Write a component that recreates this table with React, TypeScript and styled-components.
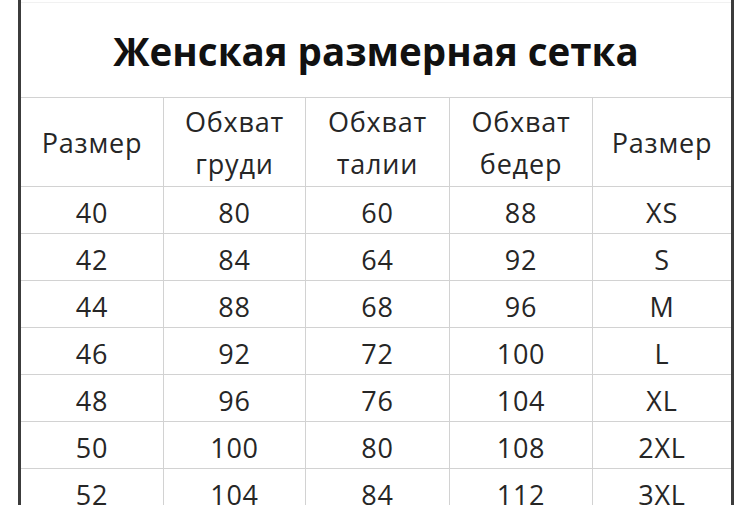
import React from 'react';
import styled, { createGlobalStyle } from 'styled-components';

const GlobalStyle = createGlobalStyle`
  html, body {
    margin: 0;
    padding: 0;
    background: #fff;
  }
  body {
    font-family: 'Open Sans', 'Noto Sans', sans-serif;
    color: #222;
  }
`;

const Sheet = styled.div`
  width: 716px;
  margin-left: 18px;
  height: 505px;
  overflow: hidden;
  box-sizing: border-box;
  border-left: 3px solid #3c3c3c;
  border-right: 3px solid #3c3c3c;
  background: #fff;
`;

const Title = styled.div`
  box-sizing: border-box;
  border-top: 1px solid #f1f1f1;
  margin-top: 2px;
  height: 96px;
  border-bottom: 1px solid #d2d2d2;
  display: flex;
  align-items: center;
  justify-content: center;
  padding-top: 2px;
  font-weight: 700;
  font-size: 38.5px;
  color: #111;
`;

const Grid = styled.div`
  display: grid;
  grid-template-columns: 143px 142px 144px 143px 1fr;
`;

const Cell = styled.div<{ $last?: boolean; $head?: boolean }>`
  height: ${(p) => (p.$head ? '89px' : '47px')};
  box-sizing: border-box;
  border-bottom: 1px solid #d2d2d2;
  border-right: ${(p) => (p.$last ? 'none' : '1px solid #d2d2d2')};
  display: flex;
  flex-direction: column;
  align-items: center;
  justify-content: center;
  padding-top: ${(p) => (p.$head ? '2px' : '6px')};
  font-size: 27px;
  line-height: ${(p) => (p.$head ? '42px' : '32px')};
  letter-spacing: 0.8px;
  color: #262626;
`;

const headers: string[][] = [
  ['Размер'],
  ['Обхват', 'груди'],
  ['Обхват', 'талии'],
  ['Обхват', 'бедер'],
  ['Размер'],
];

const rows: string[][] = [
  ['40', '80', '60', '88', 'XS'],
  ['42', '84', '64', '92', 'S'],
  ['44', '88', '68', '96', 'M'],
  ['46', '92', '72', '100', 'L'],
  ['48', '96', '76', '104', 'XL'],
  ['50', '100', '80', '108', '2XL'],
  ['52', '104', '84', '112', '3XL'],
];

export default function App() {
  return (
    <>
      <GlobalStyle />
      <Sheet>
        <Title>Женская размерная сетка</Title>
        <Grid>
          {headers.map((lines, i) => (
            <Cell key={'h' + i} $head $last={i === headers.length - 1}>
              {lines.map((l) => (
                <span key={l}>{l}</span>
              ))}
            </Cell>
          ))}
          {rows.map((row, r) =>
            row.map((val, i) => (
              <Cell key={r + '-' + i} $last={i === row.length - 1}>
                {val}
              </Cell>
            ))
          )}
        </Grid>
      </Sheet>
    </>
  );
}
